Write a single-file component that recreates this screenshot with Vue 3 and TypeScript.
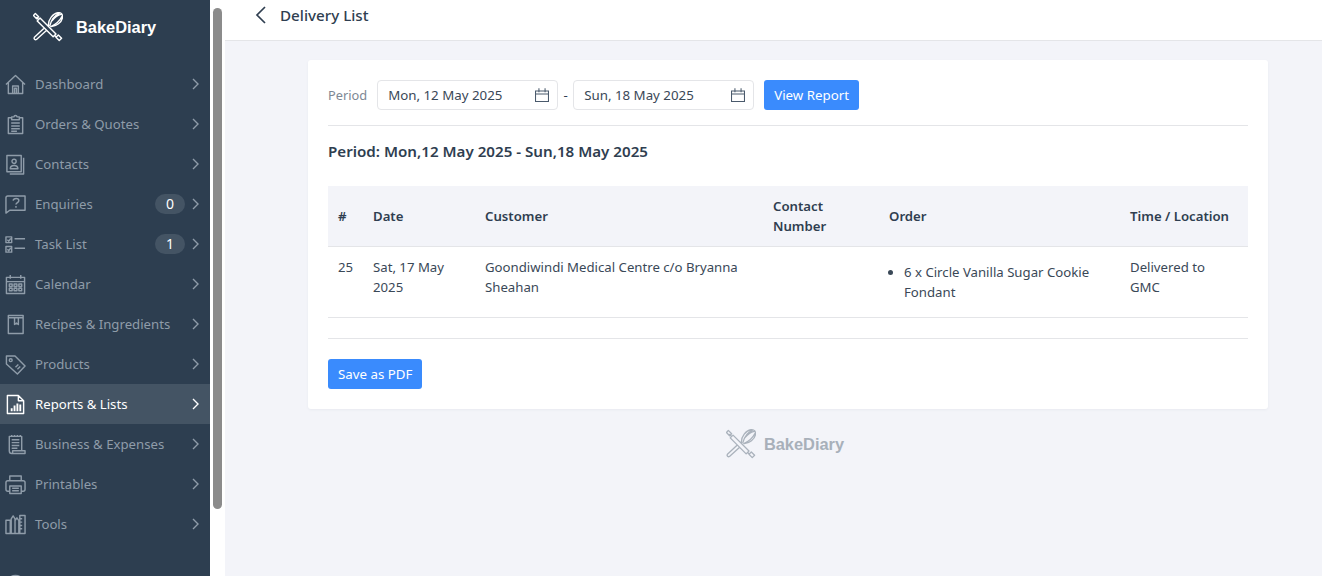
<template>
  <div class="layout">
    <aside class="sidebar">
      <div class="brand">
        <svg class="logo-icon" viewBox="0 0 32 32" fill="none" stroke="#fff" stroke-width="1.5" stroke-linecap="round" stroke-linejoin="round">
          <path :d="logoPaths" />
        </svg>
        <span class="brand-name">BakeDiary</span>
      </div>
      <nav class="nav">
        <a v-for="item in navItems" :key="item.label" class="nav-item" :class="{ active: item.active }">
          <svg class="nav-icon" viewBox="0 0 22 22" fill="none" stroke="currentColor" stroke-width="1.5" stroke-linejoin="round">
            <path :d="item.icon" />
            <path v-if="item.fill" :d="item.fill" fill="currentColor" stroke="none" />
          </svg>
          <span class="nav-label">{{ item.label }}</span>
          <span v-if="item.badge !== undefined" class="badge">{{ item.badge }}</span>
          <svg class="chevron" viewBox="0 0 7 12" fill="none" stroke="currentColor" stroke-width="1.4">
            <path d="M1 1l5 5-5 5" />
          </svg>
        </a>
        <a class="nav-item nav-more">
          <svg class="nav-icon" viewBox="0 0 22 22" fill="none" stroke="currentColor" stroke-width="1.5">
            <circle cx="11" cy="11" r="9.5" />
          </svg>
        </a>
      </nav>
    </aside>

    <div class="scrollbar"><div class="thumb"></div></div>

    <div class="main">
      <header class="topbar">
        <svg class="back" viewBox="0 0 12 18" fill="none" stroke="#2f3e50" stroke-width="1.7">
          <path d="M10 1L2 9l8 8" />
        </svg>
        <h1>Delivery List</h1>
      </header>

      <div class="content">
        <section class="card">
          <div class="filters">
            <span class="period-label">Period</span>
            <div class="date-input">
              <span>Mon, 12 May 2025</span>
              <svg class="cal" viewBox="0 0 16 16" fill="none" stroke="#4a5a6c" stroke-width="1.2">
                <path d="M.6 3.400h14.800v12H.6zM.6 6.800h14.800M4.500.4v4.400M11.500.4v4.400" />
              </svg>
            </div>
            <span class="dash">-</span>
            <div class="date-input">
              <span>Sun, 18 May 2025</span>
              <svg class="cal" viewBox="0 0 16 16" fill="none" stroke="#4a5a6c" stroke-width="1.2">
                <path d="M.6 3.400h14.800v12H.6zM.6 6.800h14.800M4.500.4v4.400M11.500.4v4.400" />
              </svg>
            </div>
            <button class="btn view-btn">View Report</button>
          </div>

          <h2 class="period-title">Period: Mon,12 May 2025 - Sun,18 May 2025</h2>

          <table class="report">
            <colgroup>
              <col class="c-num" />
              <col class="c-date" />
              <col class="c-customer" />
              <col class="c-contact" />
              <col class="c-order" />
              <col />
            </colgroup>
            <thead>
              <tr>
                <th>#</th>
                <th>Date</th>
                <th>Customer</th>
                <th>Contact Number</th>
                <th>Order</th>
                <th>Time / Location</th>
              </tr>
            </thead>
            <tbody>
              <tr>
                <td>25</td>
                <td>Sat, 17 May 2025</td>
                <td>Goondiwindi Medical Centre c/o Bryanna Sheahan</td>
                <td></td>
                <td>
                  <ul>
                    <li>6 x Circle Vanilla Sugar Cookie Fondant</li>
                  </ul>
                </td>
                <td>Delivered to GMC</td>
              </tr>
            </tbody>
          </table>

          <div class="card-foot">
            <button class="btn">Save as PDF</button>
          </div>
        </section>

        <div class="footer-logo">
          <svg class="footer-icon" viewBox="0 0 32 32" fill="none" stroke="#aab2bc" stroke-width="1.4" stroke-linecap="round" stroke-linejoin="round">
            <path :d="logoPaths" />
          </svg>
          <span>BakeDiary</span>
        </div>
      </div>
    </div>
  </div>
</template>

<script setup lang="ts">
interface NavItem {
  label: string
  icon: string
  fill?: string
  badge?: number
  active?: boolean
}

// crossed rolling pin and whisk
const logoPaths = [
  'M7.500 6.500l17 17-3 3-17-17z',
  'M5.500 7.500L3.800 5.800M2.500 1.500L6 5 3.800 7.200.5 3.800z',
  'M23 25l2 2M27 24.500l3.500 3.500-2.500 2.500-3.500-3.500z',
  'M11.500 17.500L1.500 27c-1 1.500 .8 3.300 2.200 2.300L14 20',
  'M16.500 14.500C16 8 21.500 1.500 26.500 .8c4-.6 5.500 2.200 4.800 5.700-.8 4-6.300 9-11.800 9',
  'M18 14.500C19.500 9 23.500 3.500 28 1.500M19 15.500C23.500 13.500 28.500 9.500 31 4.500M20.500 9C23 6 26 3.500 30 2.500',
].join('')

const navItems: NavItem[] = [
  {
    label: 'Dashboard',
    icon: 'M1 11L11 1.500 21 11M3.500 9v11.500h15V9M8 20.500v-8h6v8M10 20.500v-5.500h2v5.500',
  },
  {
    label: 'Orders & Quotes',
    icon: 'M7 4H3.500v16.500h15V4H15M7 3h2.500a1.500 1.500 0 013 0H15v3H7zM6.500 9.500h9M6.500 12.500h9M6.500 15.500h9M6.500 18h6',
  },
  {
    label: 'Contacts',
    icon: 'M2 1.500h15v17H2zM19.500 4v17H5M5.500 15.500c0-4.500 8-4.500 8 0zM9.500 5.500a2.200 2.200 0 100 4.400 2.200 2.200 0 000-4.400z',
  },
  {
    label: 'Enquiries',
    badge: 0,
    icon: 'M3 2h18v15H5l-4 3V4a2 2 0 012-2zM8.500 7c.5-3 6-3 6 0 0 2-3 2-3 4M11.500 12.500v2',
  },
  {
    label: 'Task List',
    badge: 1,
    icon: 'M1 3h6v6H1zM1 13h6v6H1zM10 5h11M10 15h11M2.500 6l1.500 1.500L6 4.500M2.500 16l1.500 1.500L6 14.500',
  },
  {
    label: 'Calendar',
    icon: 'M1.500 3.500h19v17h-19zM1.500 8h19M5.500 1v4M16.500 1v4M4.500 10.500h3v2.500h-3zM9.500 10.500h3v2.500h-3zM14.500 10.500h3v2.500h-3zM4.500 15h3v2.500h-3zM9.500 15h3v2.500h-3zM14.500 15h3v2.500h-3z',
  },
  {
    label: 'Recipes & Ingredients',
    icon: 'M3.500 1.500h15.500v19H3.500zM3.500 4h15.500M10 4v7l2-1.500L14 11V4',
  },
  {
    label: 'Products',
    icon: 'M1.500 2h9l10.500 10.500-8 8.500L1.500 10.500zM6 5a1.500 1.500 0 100 3 1.500 1.500 0 000-3zM11 14l3-3M13 16l3-3',
  },
  {
    label: 'Reports & Lists',
    active: true,
    icon: 'M2.500 1.500h11.500l5.500 5.500v13.500h-17zM14 1.500V7h5.500',
    fill: 'M6 15h2v3H6zM9 12h2v6H9zM12 10h2v8h-2zM15 11h2v7h-2z',
  },
  {
    label: 'Business & Expenses',
    icon: 'M4.500 2.500h13v15H21v3H7c-2 0-2.500-1.500-2.500-3zM17.500 17.500H8v3M7 6h8M7 9h8M7 12h8M7 15h6M7 1v2M10 1v2M13 1v2M16 1v2',
  },
  {
    label: 'Printables',
    icon: 'M5 7V2h12v5M3 7h16c1.500 0 2 1 2 2v7c0 1-1 2-2 2h-2M5 18H3c-1 0-2-1-2-2V9c0-1 .5-2 2-2M5 12.500h12V20.500H5zM7.500 15h7M7.500 17.500h7',
  },
  {
    label: 'Tools',
    icon: 'M1 6.500h4.500v14H1zM6.500 20.500V5l2-3 2 3v15.500zM10.500 20.500V7l2-3 2 3v13.500zM15.500 1.500H21v19h-5.500zM15.500 5h2.500M15.500 8.500h2.500M15.500 12h2.500M15.500 15.500h2.500M1 20.500h20',
  },
]
</script>

<style scoped>
.layout {
  display: flex;
  height: 576px;
  overflow: hidden;
  font-family: "Noto Sans", "Open Sans", sans-serif;
  color: #2f3e50;
  background: #f3f4f9;
}

.sidebar {
  flex: 0 0 210px;
  background: #2d3e50;
  overflow: hidden;
}

.brand {
  display: flex;
  align-items: center;
  height: 54px;
  padding-left: 33px;
  gap: 13px;
}

.logo-icon {
  width: 30px;
  height: 30px;
}

.brand-name {
  font-family: "Liberation Sans", Arial, sans-serif;
  font-weight: 700;
  font-size: 16.4px;
  color: #fff;
}

.nav {
  margin-top: 10px;
}

.nav-item {
  display: flex;
  align-items: center;
  height: 40px;
  padding: 0 11px 0 5px;
  font-size: 13.2px;
  color: #8f9ca9;
}

.nav-item.active {
  background: #445464;
  color: #fff;
}

.nav-more {
  margin-top: 20px;
}

.nav-icon {
  flex: none;
  width: 21px;
  height: 21px;
}

.nav-label {
  flex: 1;
  margin-left: 9px;
  white-space: nowrap;
}

.badge {
  width: 30px;
  height: 20px;
  margin-right: 7px;
  border-radius: 10px;
  background: #445464;
  color: #fff;
  font-size: 14px;
  line-height: 20px;
  text-align: center;
}

.chevron {
  flex: none;
  width: 7px;
  height: 12px;
}

.scrollbar {
  flex: 0 0 15px;
  box-sizing: border-box;
  background: #fff;
  padding: 8px 3px 0;
}

.thumb {
  height: 501px;
  border-radius: 5px;
  background: #8b8b8b;
}

.main {
  flex: 1;
  min-width: 0;
}

.topbar {
  display: flex;
  align-items: center;
  height: 30px;
  padding: 0 0 10px 30px;
  box-sizing: content-box;
  background: #fff;
  border-bottom: 1px solid #e4e5e8;
}

.back {
  width: 12px;
  height: 18px;
}

.topbar h1 {
  margin: 0 0 0 13px;
  font-size: 15.2px;
  font-weight: 500;
}

.content {
  padding-top: 19px;
}

.card {
  width: 920px;
  margin-left: 83px;
  padding: 20px;
  background: #fff;
  border-radius: 3px;
  box-shadow: 0 1px 3px rgba(40, 50, 70, 0.05);
}

.filters {
  display: flex;
  align-items: center;
  height: 30px;
  padding-bottom: 15px;
  box-sizing: content-box;
  border-bottom: 1px solid #e4e5e8;
  font-size: 13.3px;
}

.period-label {
  color: #7d8894;
  margin-right: 10px;
  font-size: 12.8px;
}

.date-input {
  display: flex;
  align-items: center;
  justify-content: space-between;
  box-sizing: border-box;
  width: 181px;
  height: 30px;
  padding: 0 8px 0 10px;
  border: 1px solid #e4e5e8;
  border-radius: 4px;
  color: #3a4857;
}

.cal {
  width: 14px;
  height: 14px;
}

.dash {
  width: 15px;
  text-align: center;
}

.btn {
  height: 30px;
  padding: 0 10px;
  border: 0;
  border-radius: 3px;
  background: #3a8bfd;
  color: #fff;
  font: inherit;
  font-size: 13.3px;
}

.view-btn {
  margin-left: 10px;
}

.period-title {
  margin: 14px 0 24px;
  font-size: 15.15px;
  line-height: 22px;
  font-weight: 600;
}

.report {
  width: 100%;
  table-layout: fixed;
  border-collapse: collapse;
  font-size: 13.2px;
}

.c-num { width: 35px; }
.c-date { width: 112px; }
.c-customer { width: 288px; }
.c-contact { width: 116px; }
.c-order { width: 241px; }

.report th {
  height: 60px;
  padding: 0 10px;
  background: #f3f4f9;
  border-bottom: 1px solid #e4e5e8;
  text-align: left;
  font-weight: 600;
  line-height: 20px;
}

.report td {
  padding: 10px;
  border-bottom: 1px solid #e4e5e8;
  vertical-align: top;
  line-height: 20px;
  color: #3a4857;
}

.report ul {
  margin: 5px 0;
  padding-left: 15px;
}

.card-foot {
  margin-top: 20px;
  padding-top: 20px;
  border-top: 1px solid #e4e5e8;
}

.footer-logo {
  display: flex;
  align-items: center;
  justify-content: center;
  gap: 8px;
  width: 920px;
  margin: 20px 0 0 100px;
  font-family: "Liberation Sans", Arial, sans-serif;
  font-weight: 700;
  font-size: 16.4px;
  color: #a8b0ba;
}

.footer-icon {
  width: 30px;
  height: 30px;
}
</style>
